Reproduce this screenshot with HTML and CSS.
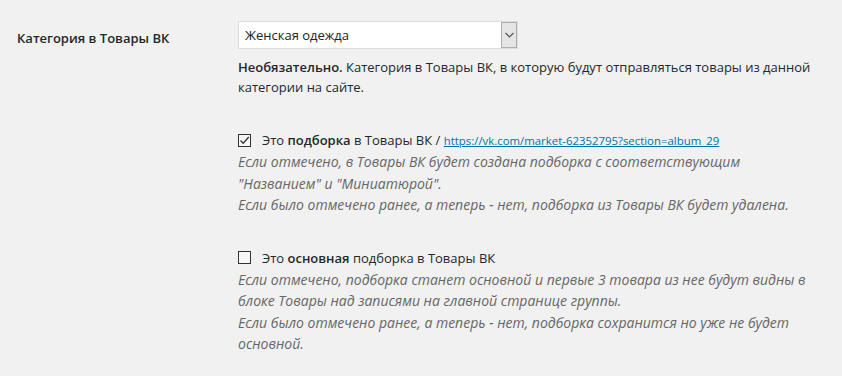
FILE: index.html
```html
<!DOCTYPE html>
<html lang="ru">
<head>
<meta charset="utf-8">
<link rel="stylesheet" href="styles.css">
</head>
<body>
<div class="form-row">
  <div class="label">Категория в Товары ВК</div>
  <div class="field">
    <div class="select">
      <span class="select-value">Женская одежда</span>
      <span class="select-arrow">
        <svg width="9" height="6" viewBox="0 0 9 6"><path d="M0.5 1 L4.5 5 L8.5 1" fill="none" stroke="#555" stroke-width="1.2"/></svg>
      </span>
    </div>
    <p class="desc"><b>Необязательно.</b> Категория в Товары ВК, в которую будут отправляться товары из данной категории на сайте.</p>

    <div class="option first">
      <label class="check-row"><span class="checkbox checked">
        <svg width="11" height="11" viewBox="0 0 11 11"><path d="M1.5 5.5 L4.2 8.3 L9.8 2" fill="none" stroke="#333" stroke-width="1.3"/></svg>
      </span>Это&nbsp;<b>подборка</b>&nbsp;в Товары ВК /&nbsp;<a href="#" class="link">https://vk.com/market-62352795?section=album_29</a></label>
      <p class="note">Если отмечено, в Товары ВК будет создана подборка с соответствующим<br>"Названием" и "Миниатюрой".<br>Если было отмечено ранее, а теперь - нет, подборка из Товары ВК будет удалена.</p>
    </div>

    <div class="option">
      <label class="check-row"><span class="checkbox"></span>Это&nbsp;<b>основная</b>&nbsp;подборка в Товары ВК</label>
      <p class="note">Если отмечено, подборка станет основной и первые 3 товара из нее будут видны в<br>блоке Товары над записями на главной странице группы.<br>Если было отмечено ранее, а теперь - нет, подборка сохранится но уже не будет<br>основной.</p>
    </div>
  </div>
</div>
</body>
</html>
```
FILE: styles.css
```css
html, body {
  margin: 0;
  padding: 0;
  background: #f1f1f1;
}
body {
  font-family: "Open Sans", "Noto Sans", sans-serif;
  font-size: 13px;
  color: #23282d;
}
.form-row {
  display: grid;
  grid-template-columns: 221px 1fr;
  padding: 21px 0 0 17px;
}
.label {
  font-weight: 600;
  font-size: 13px;
  padding-top: 8px;
  color: #23282d;
}
.field {
  display: flex;
  flex-direction: column;
}
.select {
  width: 280px;
  height: 28px;
  box-sizing: border-box;
  border: 1px solid #dddddd;
  background: #fff;
  display: flex;
  align-items: stretch;
}
.select-value {
  flex: 1;
  padding-left: 6px;
  line-height: 26px;
  color: #222;
}
.select-arrow {
  width: 16px;
  box-sizing: border-box;
  background: #e5e5e5;
  border: 1px solid #adadad;
  display: flex;
  align-items: center;
  justify-content: center;
}
.desc {
  margin: 9px 0 0;
  line-height: 19.5px;
  width: 580px;
}
.desc b { font-weight: 600; }
.option { display: flex; flex-direction: column; }
.option.first { margin-top: 36px; }
.option + .option { margin-top: 35px; }
.check-row {
  display: flex;
  align-items: center;
  height: 14px;
}
.check-row b { font-weight: 600; }
.checkbox {
  width: 13px;
  height: 13px;
  box-sizing: border-box;
  border: 1px solid #333;
  background: #f7f7f7;
  margin-right: 11px;
  display: flex;
  align-items: center;
  justify-content: center;
}
.link {
  color: #0073aa;
  font-size: 11.4px;
  text-decoration: underline;
}
.note {
  margin: 4px 0 0;
  font-style: italic;
  font-size: 14px;
  color: #666;
  line-height: 21.5px;
}
```
